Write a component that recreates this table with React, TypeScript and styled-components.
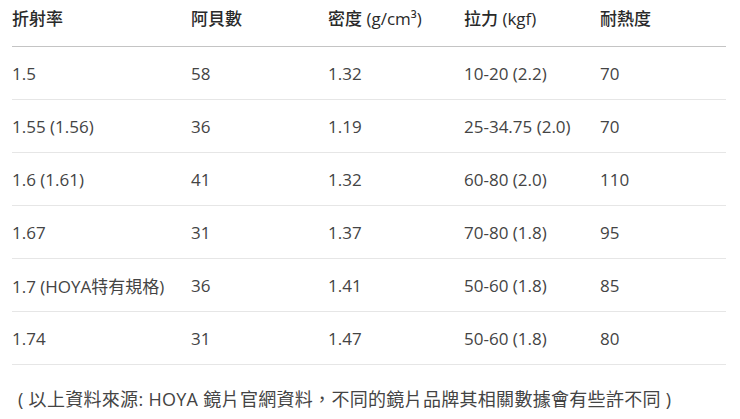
import styled, { createGlobalStyle } from "styled-components";

const GlobalStyle = createGlobalStyle`
  body {
    margin: 0;
    background: #fff;
    font-family: "Open Sans", "Noto Sans CJK TC", sans-serif;
    color: #333;
  }
`;

const Page = styled.div`
  padding: 0 14px 0 12px;
`;

const Table = styled.table`
  width: 714px;
  border-collapse: collapse;
  table-layout: fixed;
  font-size: 17px;
`;

const HeadCell = styled.th<{ $w: number }>`
  width: ${(p) => p.$w}px;
  height: 34px;
  padding: 0 0 12px;
  text-align: left;
  vertical-align: middle;
  font-weight: 500;
  color: #2a2a2a;
  border-bottom: 1px solid #c4c4c4;
`;

const Row = styled.tr`
  height: 53px;
  border-bottom: 1px solid #e6e6e6;
`;

const Cell = styled.td`
  padding: 0;
  color: #444;
  white-space: nowrap;
`;

const Note = styled.p`
  margin: 20px 0 0 6px;
  font-size: 18px;
  color: #444;
  letter-spacing: 0.3px;
`;

const Punct = styled.span`
  font-family: "Noto Sans CJK TC", sans-serif;
  font-variant-east-asian: traditional;
`;

const columns = [
  { label: "折射率", w: 179 },
  { label: "阿貝數", w: 137 },
  { label: "密度 (g/cm³)", w: 136 },
  { label: "拉力 (kgf)", w: 136 },
  { label: "耐熱度", w: 126 },
];

const rows = [
  ["1.5", "58", "1.32", "10-20 (2.2)", "70"],
  ["1.55 (1.56)", "36", "1.19", "25-34.75 (2.0)", "70"],
  ["1.6 (1.61)", "41", "1.32", "60-80 (2.0)", "110"],
  ["1.67", "31", "1.37", "70-80 (1.8)", "95"],
  ["1.7 (HOYA特有規格)", "36", "1.41", "50-60 (1.8)", "85"],
  ["1.74", "31", "1.47", "50-60 (1.8)", "80"],
];

function App() {
  return (
    <Page lang="zh-Hant-TW">
      <GlobalStyle />
      <Table>
        <thead>
          <tr>
            {columns.map((c) => (
              <HeadCell key={c.label} $w={c.w}>
                {c.label}
              </HeadCell>
            ))}
          </tr>
        </thead>
        <tbody>
          {rows.map((r, i) => (
            <Row key={i}>
              {r.map((v, j) => (
                <Cell key={j}>{v}</Cell>
              ))}
            </Row>
          ))}
        </tbody>
      </Table>
      <Note>
        ( 以上資料來源: HOYA 鏡片官網資料<Punct>，</Punct>不同的鏡片品牌其相關數據會有些許不同 )
      </Note>
    </Page>
  );
}

export default App;
